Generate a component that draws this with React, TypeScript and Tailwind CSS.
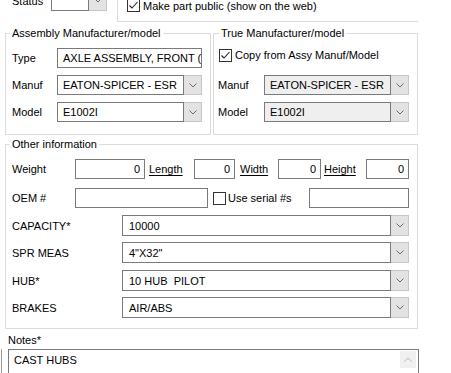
import React from 'react';

// Small pieces of a classic WinForms edit screen

function CheckBox({ checked }: { checked?: boolean }) {
  return (
    <span className="flex h-[13px] w-[13px] shrink-0 items-center justify-center border border-[#333333] bg-white">
      {checked && (
        <svg width="11" height="11" viewBox="0 0 11 11" fill="none">
          <path d="M1.5 5.5 L4 8 L9.5 2" stroke="#222222" strokeWidth="1.1" />
        </svg>
      )}
    </span>
  );
}

function Chevron({ up }: { up?: boolean }) {
  return (
    <svg width="8" height="5" viewBox="0 0 8 5" fill="none">
      <path d={up ? 'M0.5 4.5 L4 1 L7.5 4.5' : 'M0.5 0.5 L4 4 L7.5 0.5'} stroke={up ? '#b8b8b8' : '#6a6a6a'} strokeWidth="1" />
    </svg>
  );
}

function TextBox({ value, right, className }: { value?: string; right?: boolean; className?: string }) {
  return (
    <div
      className={`flex h-[20px] min-w-0 items-center overflow-hidden border border-[#7a7a7a] bg-white ${right ? 'justify-end pr-[4px]' : 'pl-[5px]'} ${className ?? ''}`}
    >
      <span className="whitespace-pre">{value}</span>
    </div>
  );
}

function Combo({
  value,
  disabled,
  className,
  pad = 'pl-[5px]',
  h = 'h-[20px]',
}: {
  value?: string;
  disabled?: boolean;
  className?: string;
  pad?: string;
  h?: string;
}) {
  return (
    <div className={`flex min-w-0 ${h} ${className ?? ''}`}>
      <div
        className={`flex min-w-0 flex-1 items-center overflow-hidden border border-[#7a7a7a] ${pad} ${disabled ? 'bg-[#efefef]' : 'bg-white'}`}
      >
        <span className="whitespace-pre">{value}</span>
      </div>
      <div className="flex w-[18px] shrink-0 items-center justify-center border border-l-0 border-[#c6c6c6] bg-[#e3e3e3]">
        <Chevron />
      </div>
    </div>
  );
}

export default function App() {
  return (
    <div className="h-[373px] w-[451px] overflow-hidden bg-white font-['Liberation_Sans',Arial,sans-serif] text-[11px] leading-[14px] text-black">
      {/* top strip, cut off by the screenshot */}
      <div className="flex h-[22px]">
        <div className="flex w-[117px] items-start -mt-[10px]">
          <span className="ml-[12px] mt-[4px] w-[39px] shrink-0">Status</span>
          <Combo className="w-[56px] shrink-0" h="h-[21px]" />
        </div>
        <div className="w-[301px] border-b border-l border-[#dcdcdc]">
          <div className="ml-[9px] -mt-[3px] flex items-center">
            <CheckBox checked />
            <span className="ml-[3px] mt-[2px]">Make part public (show on the web)</span>
          </div>
        </div>
      </div>

      {/* manufacturer groups */}
      <div className="mt-[4px] flex">
        <fieldset className="ml-[5px] w-[206px] min-w-0 border border-[#dcdcdc] pb-[12px] pl-[6px] pr-[8px] pt-[8px]">
          <legend className="-ml-[2px] px-[2px]">Assembly Manufacturer/model</legend>
          <div className="flex items-center">
            <span className="w-[45px] shrink-0">Type</span>
            <TextBox className="flex-1" value="AXLE ASSEMBLY, FRONT (STEER)" />
          </div>
          <div className="mt-[7px] flex items-center">
            <span className="w-[45px] shrink-0">Manuf</span>
            <Combo className="flex-1" value="EATON-SPICER - ESR" />
          </div>
          <div className="mt-[7px] flex items-center">
            <span className="w-[45px] shrink-0">Model</span>
            <Combo className="flex-1" value="E1002I" />
          </div>
        </fieldset>

        <fieldset className="ml-[2px] w-[205px] min-w-0 border border-[#dcdcdc] pb-[12px] pl-[4px] pr-[8px] pt-[8px]">
          <legend className="ml-[1px] px-[2px]">True Manufacturer/model</legend>
          <div className="flex h-[14px] items-center pl-[1px]">
            <CheckBox checked />
            <span className="ml-[3px]">Copy from Assy Manuf/Model</span>
          </div>
          <div className="mt-[13px] flex items-center">
            <span className="w-[46px] shrink-0">Manuf</span>
            <Combo className="flex-1" value="EATON-SPICER - ESR" disabled />
          </div>
          <div className="mt-[7px] flex items-center">
            <span className="w-[46px] shrink-0">Model</span>
            <Combo className="flex-1" value="E1002I" disabled />
          </div>
        </fieldset>
      </div>

      {/* other information */}
      <fieldset className="ml-[5px] mt-[2px] w-[413px] min-w-0 border border-[#dcdcdc] pb-[10px] pl-[6px] pr-[8px] pt-[8px]">
        <legend className="-ml-[2px] px-[2px]">Other information</legend>
        <div className="flex items-center">
          <span className="w-[63px] shrink-0">Weight</span>
          <TextBox className="w-[70px] shrink-0" value="0" right />
          <span className="ml-[4px] w-[45px] shrink-0 underline underline-offset-2">Length</span>
          <TextBox className="w-[41px] shrink-0" value="0" right />
          <span className="ml-[5px] w-[38px] shrink-0 underline underline-offset-2">Width</span>
          <TextBox className="w-[43px] shrink-0" value="0" right />
          <span className="ml-[3px] w-[42px] shrink-0 underline underline-offset-2">Height</span>
          <TextBox className="w-[43px] shrink-0" value="0" right />
        </div>
        <div className="mt-[9px] flex items-center">
          <span className="w-[63px] shrink-0">OEM #</span>
          <TextBox className="w-[133px] shrink-0" />
          <span className="ml-[5px]">
            <CheckBox />
          </span>
          <span className="ml-[2px]">Use serial #s</span>
          <TextBox className="ml-auto w-[100px] shrink-0" />
        </div>
        <div className="mt-[7px] flex items-center">
          <span className="w-[110px] shrink-0">CAPACITY*</span>
          <Combo className="flex-1" h="h-[21px]" pad="pl-[6px]" value="10000" />
        </div>
        <div className="mt-[6px] flex items-center">
          <span className="w-[110px] shrink-0">SPR MEAS</span>
          <Combo className="flex-1" h="h-[21px]" pad="pl-[6px]" value={'4"X32"'} />
        </div>
        <div className="mt-[7px] flex items-center">
          <span className="w-[110px] shrink-0">HUB*</span>
          <Combo className="flex-1" h="h-[21px]" pad="pl-[6px]" value="10 HUB  PILOT" />
        </div>
        <div className="mt-[6px] flex items-center">
          <span className="w-[110px] shrink-0">BRAKES</span>
          <Combo className="flex-1" h="h-[21px]" pad="pl-[6px]" value="AIR/ABS" />
        </div>
      </fieldset>

      {/* notes */}
      <div className="ml-[8px] mt-[4px]">Notes*</div>
      <div className="mt-[2px] flex">
        <div className="ml-[1px] w-px bg-[#9a9a9a]" />
        <div className="ml-[6px] flex h-[50px] w-[411px] justify-between border border-[#7a7a7a] bg-white">
          <span className="pl-[5px] pt-[3px]">CAST HUBS</span>
          <div className="mr-[2px] mt-[1px] flex h-[17px] w-[16px] items-center justify-center bg-[#f0f0f0]">
            <Chevron up />
          </div>
        </div>
      </div>
    </div>
  );
}
